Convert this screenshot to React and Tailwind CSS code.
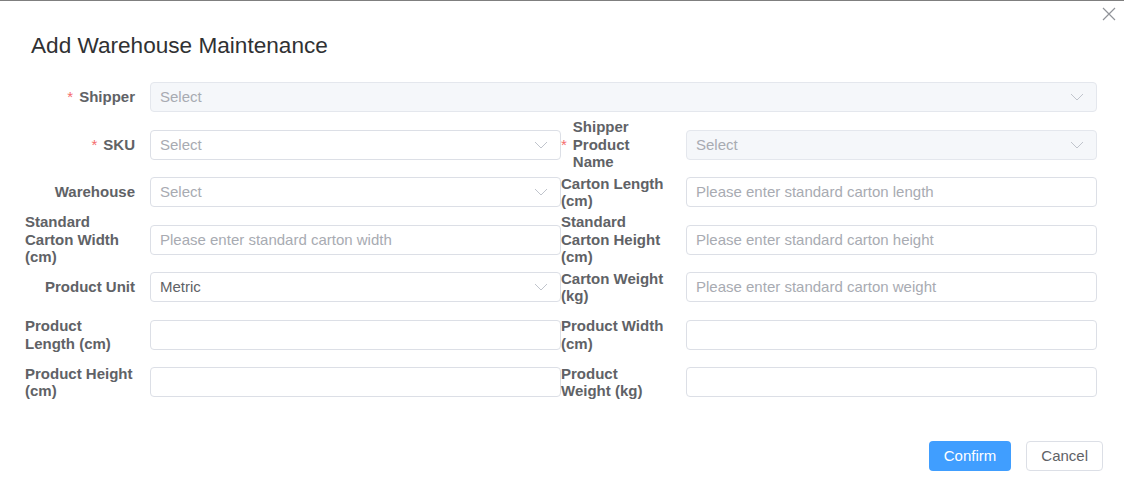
import React from "react";

const ROWS = [
  [
    { label: "SKU", required: true, type: "select", placeholder: "Select" },
    { label: "Shipper Product Name", required: true, type: "select", placeholder: "Select", disabled: true },
  ],
  [
    { label: "Warehouse", type: "select", placeholder: "Select" },
    { label: "Carton Length (cm)", type: "input", placeholder: "Please enter standard carton length" },
  ],
  [
    { label: "Standard Carton Width (cm)", type: "input", placeholder: "Please enter standard carton width" },
    { label: "Standard Carton Height (cm)", type: "input", placeholder: "Please enter standard carton height" },
  ],
  [
    { label: "Product Unit", type: "select", value: "Metric" },
    { label: "Carton Weight (kg)", type: "input", placeholder: "Please enter standard carton weight" },
  ],
  [
    { label: "Product Length (cm)", type: "input" },
    { label: "Product Width (cm)", type: "input" },
  ],
  [
    { label: "Product Height (cm)", type: "input" },
    { label: "Product Weight (kg)", type: "input" },
  ],
];

function Chevron() {
  return (
    <svg width="14" height="8" viewBox="0 0 14 8" fill="none" className="shrink-0">
      <path d="M1 1 L7 7 L13 1" stroke="#c0c4cc" strokeWidth="1" />
    </svg>
  );
}

function Label({ text, required }) {
  return (
    <label className="w-[125px] shrink-0 pr-[15px] flex items-center justify-end font-bold text-[15px] leading-[17.5px] text-[#606266]">
      {required && <span className="text-[#f56c6c] font-normal mr-[6px]">*</span>}
      <span>{text}</span>
    </label>
  );
}

function Control({ field }) {
  const base = "flex-1 h-[30px] rounded-[4px] border flex items-center pl-[9px] pr-[12px] text-[15px]";
  const box = field.disabled
    ? "bg-[#f5f7fa] border-[#e4e7ed]"
    : "bg-white border-[#dcdfe6]";
  if (field.type === "select") {
    return (
      <div className={`${base} ${box}`}>
        <span className={`flex-1 pt-px ${field.value ? "text-[#606266]" : "text-[#a8abb2]"}`}>
          {field.value || field.placeholder}
        </span>
        <Chevron />
      </div>
    );
  }
  return (
    <div className={`${base} ${box}`}>
      <input
        className="w-full pt-px outline-none bg-transparent text-[#606266] placeholder:text-[#a8abb2]"
        placeholder={field.placeholder || ""}
      />
    </div>
  );
}

function Field({ field }) {
  return (
    <div className="flex items-center h-[30px]">
      <Label text={field.label} required={field.required} />
      <Control field={field} />
    </div>
  );
}

export default function App() {
  return (
    <div className="h-[490px] bg-white flex flex-col font-['Liberation_Sans',Arial,sans-serif]">
      <div className="h-px bg-[#7f7f7f]" />

      {/* Header */}
      <div className="relative pt-[33px] pl-[31px]">
        <h2 className="text-[22.6px] leading-6 text-[#303133]">Add Warehouse Maintenance</h2>
        <button className="absolute right-[8px] top-[6px] w-[14px] h-[14px]">
          <svg width="14" height="14" viewBox="0 0 14 14" fill="none">
            <path d="M1 1 L13 13 M13 1 L1 13" stroke="#909399" strokeWidth="1.2" />
          </svg>
        </button>
      </div>

      {/* Form */}
      <div className="mt-[24px] pl-[25px] pr-[27px] grid grid-cols-2 gap-y-[17.5px]">
        <div className="col-span-2">
          <Field field={{ label: "Shipper", required: true, type: "select", placeholder: "Select", disabled: true }} />
        </div>
        {ROWS.map((row, i) => (
          <React.Fragment key={i}>
            <Field field={row[0]} />
            <Field field={row[1]} />
          </React.Fragment>
        ))}
      </div>

      {/* Footer */}
      <div className="mt-[44px] pr-[21px] flex justify-end gap-[15px]">
        <button className="h-[30px] px-[15px] rounded-[4px] bg-[#409eff] text-white text-[15px]">Confirm</button>
        <button className="h-[30px] px-[14px] rounded-[4px] bg-white border border-[#dcdfe6] text-[#606266] text-[15px]">
          Cancel
        </button>
      </div>
    </div>
  );
}
